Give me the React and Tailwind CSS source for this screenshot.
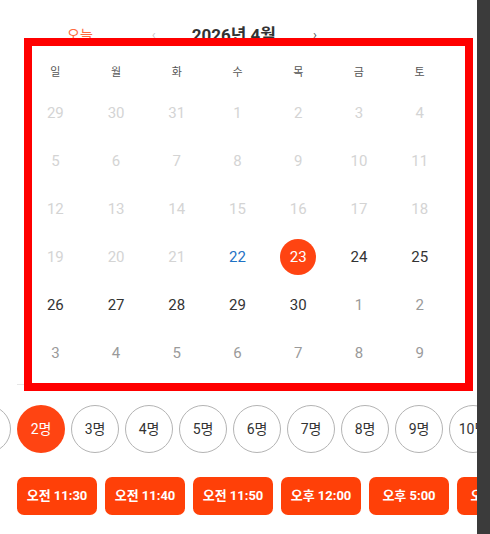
import React from "react";

const font = { fontFamily: '"Roboto", "Noto Sans CJK KR", sans-serif' };

const weekdays = ["일", "월", "화", "수", "목", "금", "토"];

const rows = [
  [[29, "p"], [30, "p"], [31, "p"], [1, "p"], [2, "p"], [3, "p"], [4, "p"]],
  [[5, "p"], [6, "p"], [7, "p"], [8, "p"], [9, "p"], [10, "p"], [11, "p"]],
  [[12, "p"], [13, "p"], [14, "p"], [15, "p"], [16, "p"], [17, "p"], [18, "p"]],
  [[19, "p"], [20, "p"], [21, "p"], [22, "t"], [23, "s"], [24, "a"], [25, "a"]],
  [[26, "a"], [27, "a"], [28, "a"], [29, "a"], [30, "a"], [1, "n"], [2, "n"]],
  [[3, "n"], [4, "n"], [5, "n"], [6, "n"], [7, "n"], [8, "n"], [9, "n"]],
];

const people = ["1명", "2명", "3명", "4명", "5명", "6명", "7명", "8명", "9명", "10명", "11명"];
const times = ["오전 11:30", "오전 11:40", "오전 11:50", "오후 12:00", "오후 5:00", "오후 5:10"];

function Day({ d, k }) {
  if (k === "s") {
    return (
      <div className="flex h-[48px] items-center justify-center">
        <div className="flex h-[36px] w-[36px] items-center justify-center rounded-full bg-[#ff4412] text-[15px] text-white">
          {d}
        </div>
      </div>
    );
  }
  const color =
    k === "p" ? "text-[#d4d4d4]" : k === "n" ? "text-[#9a9a9a]" : k === "t" ? "text-[#1f72c4]" : "text-[#333333]";
  return <div className={`flex h-[48px] items-center justify-center text-[15px] ${color}`}>{d}</div>;
}

export default function App() {
  return (
    <div className="flex h-[534px] w-[490px] bg-[#3b3b3b]" style={font}>
      <div className="relative h-[534px] w-[477px] overflow-hidden bg-white">
        {/* header */}
        <div className="flex h-[57px] items-start pt-[25px]">
          <span className="ml-[67px] text-[14px] leading-[20px] text-[#ff6a3f]">오늘</span>
          <span className="ml-[59px] text-[13px] leading-[20px] text-[#c8c8c8]">‹</span>
          <span className="ml-[36px] text-[17px] font-bold leading-[20px] text-[#333333]">2026년 4월</span>
          <span className="ml-[37px] text-[13px] leading-[20px] text-[#555555]">›</span>
        </div>

        {/* calendar */}
        <div className="ml-[25px] grid w-[425px] grid-cols-7">
          {weekdays.map((w) => (
            <div key={w} className="flex h-[32px] items-center justify-center pt-[1px] text-[11px] text-[#555555]">
              {w}
            </div>
          ))}
          {rows.flat().map(([d, k], i) => (
            <Day key={i} d={d} k={k} />
          ))}
        </div>

        {/* divider */}
        <div className="ml-[17px] mt-[7px] h-px w-[440px] bg-[#e6e6e6]" />

        {/* party size */}
        <div className="ml-[-37px] mt-[20px] flex gap-[6px]">
          {people.map((p) => (
            <div
              key={p}
              className={`flex h-[48px] w-[48px] shrink-0 items-center justify-center rounded-full text-[14px] ${
                p === "2명" ? "bg-[#ff4412] text-white" : "border border-[#b4b4b4] text-[#333333]"
              }`}
            >
              {p}
            </div>
          ))}
        </div>

        {/* times */}
        <div className="ml-[17px] mt-[24px] flex gap-[8px]">
          {times.map((t) => (
            <div
              key={t}
              className="flex h-[38px] w-[80px] shrink-0 items-center justify-center rounded-[7px] bg-[#ff4008] text-[13px] font-bold text-white"
            >
              {t}
            </div>
          ))}
        </div>

        {/* red annotation overlay */}
        <div className="pointer-events-none absolute left-[24px] top-[38px] h-[353px] w-[449px] border-[8px] border-[#ff0000]" />
      </div>
      <div className="flex-1 bg-[#3b3b3b]" />
    </div>
  );
}
